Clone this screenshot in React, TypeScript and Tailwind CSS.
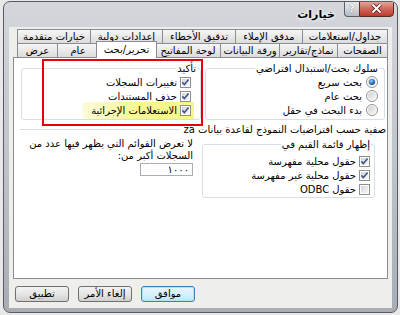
import React from 'react';

const Check = ({ on = true }: { on?: boolean }) => (
  <svg width="11" height="11" viewBox="0 0 11 11" className="shrink-0">
    <defs>
      <linearGradient id="cbx" x1="0" y1="0" x2="1" y2="1">
        <stop offset="0" stopColor="#d4d4d4" />
        <stop offset="1" stopColor="#fafafa" />
      </linearGradient>
    </defs>
    <rect x="0.5" y="0.5" width="10" height="10" fill="#fff" stroke="#8e8f8f" />
    <rect x="2" y="2" width="7" height="7" fill="url(#cbx)" />
    {on && <path d="M2.3 5.4 L4.4 7.6 L8.6 2.6" fill="none" stroke="#40568c" strokeWidth="1.6" />}
  </svg>
);

const Radio = ({ on = false }: { on?: boolean }) => (
  <svg width="12" height="12" viewBox="0 0 12 12" className="shrink-0">
    <defs>
      <linearGradient id="rdo" x1="0" y1="0" x2="1" y2="1">
        <stop offset="0" stopColor="#cfcfcf" />
        <stop offset="1" stopColor="#f7f7f7" />
      </linearGradient>
      <radialGradient id="rdot" cx="0.4" cy="0.35" r="0.7">
        <stop offset="0" stopColor="#9fd3ff" />
        <stop offset="0.6" stopColor="#2a6fc0" />
        <stop offset="1" stopColor="#0f3f86" />
      </radialGradient>
    </defs>
    <circle cx="6" cy="6" r="5.5" fill="#fff" stroke="#8e8f8f" />
    <circle cx="6" cy="6" r="4" fill="url(#rdo)" />
    {on && <circle cx="6" cy="6" r="3" fill="url(#rdot)" />}
  </svg>
);

const Tab = ({ label, w, first, active }: { label: string; w: string; first?: boolean; active?: boolean }) => (
  <div
    className={`flex items-center justify-center border-t border-l border-[#898c95] text-[10px] leading-none ${w} ${
      first ? 'border-r' : ''
    } ${
      active
        ? 'relative z-10 -mx-[2px] -mt-[2px] -mb-px h-[17px] border-r bg-white'
        : 'h-[14px] bg-gradient-to-b from-[#f6f6f6] to-[#dcdcdc]'
    }`}
  >
    {label}
  </div>
);

const Btn = ({ label, focus }: { label: string; focus?: boolean }) => (
  <div
    className={`flex h-[16px] w-[54px] items-center justify-center rounded-[3px] border text-[10px] leading-none ${
      focus
        ? 'border-[#3c7fb1] bg-gradient-to-b from-[#eaf6fd] via-[#d9f0fc] to-[#bee6fd] shadow-[inset_0_0_0_1px_#b6e1f7]'
        : 'border-[#707070] bg-gradient-to-b from-[#f2f2f2] via-[#e6e6e6] to-[#cfcfcf]'
    }`}
  >
    {label}
  </div>
);

export default function App() {
  return (
    <div className="h-[315px] w-[400px] overflow-hidden bg-[#e8e8e8] pt-px pl-[3px] font-['DejaVu_Sans',sans-serif] text-black">
      <div className="flex h-[312px] w-[395px] flex-col overflow-hidden rounded-[7px] border border-[#585c63] bg-gradient-to-b from-[#d3d6db] via-[#c0c4cb] to-[#a8acb4]">
        {/* title bar */}
        <div className="flex h-[25px] shrink-0 items-start justify-end pr-[3px]">
          <span className="mt-[6px] mr-[9px] text-[11px] font-bold leading-[13px] [text-shadow:0_0_5px_#fff,0_0_3px_#fff]">
            خيارات
          </span>
          <div className="-mt-[2px] flex h-[17px] w-[15px] items-center justify-center rounded-bl-[4px] border border-r-0 border-[#5c6168] bg-gradient-to-b from-[#e6e9ed] via-[#d3d8de] to-[#b4bbc5] text-[10px] font-bold text-white [text-shadow:0_0_1px_#4a4f56]">
            ?
          </div>
          <div className="-mt-[2px] h-[17px] w-[35px] rounded-br-[4px] border border-[#5a2a26] bg-gradient-to-b from-[#e8ada2] via-[#cf6a5d] to-[#c0382b]">
            <svg width="33" height="15" viewBox="0 0 33 15">
              <path d="M12.5 3.5 L20.5 11.5 M20.5 3.5 L12.5 11.5" stroke="#4a1510" strokeWidth="3.6" />
              <path d="M12.5 3.5 L20.5 11.5 M20.5 3.5 L12.5 11.5" stroke="#fff" strokeWidth="2" />
            </svg>
          </div>
        </div>

        {/* client area */}
        <div dir="rtl" className="mx-[5px] mb-[4px] flex flex-1 flex-col bg-[#eeeeeb] pt-[2px]">
          <div className="flex pr-[4px]">
            <Tab first label="جداول/استعلامات" w="w-[86px]" />
            <Tab label="مدقق الإملاء" w="w-[67px]" />
            <Tab label="تدقيق الأخطاء" w="w-[73px]" />
            <Tab label="إعدادات دولية" w="w-[72px]" />
            <Tab label="خيارات متقدمة" w="w-[73px]" />
          </div>
          <div className="flex pr-[4px]">
            <Tab first label="الصفحات" w="w-[51px]" />
            <Tab label="نماذج/تقارير" w="w-[58px]" />
            <Tab label="ورقة البيانات" w="w-[59px]" />
            <Tab label="لوحة المفاتيح" w="w-[65px]" />
            <Tab active label="تحرير/بحث" w="w-[61px]" />
            <Tab label="عام" w="w-[41px]" />
            <Tab label="عرض" w="w-[40px]" />
          </div>

          {/* panel */}
          <div className="relative mr-[4px] h-[222px] w-[375px] border border-[#898c95] bg-white text-[10px] leading-[13px]">
            <div className="grid grid-cols-[180px_180px] gap-x-[4px] pt-[4px] pr-[2px]">
              <fieldset className="rounded-[3px] border border-[#d5dfe5] pb-[2px]">
                <legend className="mr-[5px] px-px">سلوك بحث/استبدال افتراضي</legend>
                <div className="flex h-[14px] items-center gap-[4px] pr-[6px]">
                  <Radio on />
                  <span>بحث سريع</span>
                </div>
                <div className="flex h-[14px] items-center gap-[4px] pr-[6px]">
                  <Radio />
                  <span>بحث عام</span>
                </div>
                <div className="flex h-[14px] items-center gap-[4px] pr-[6px]">
                  <Radio />
                  <span>بدء البحث في حقل</span>
                </div>
              </fieldset>

              <fieldset className="rounded-[3px] border border-[#d5dfe5] pb-[2px]">
                <legend className="mr-[3px] px-px">تأكيد</legend>
                <div className="flex h-[14px] items-center gap-[3px] pr-[9px]">
                  <Check />
                  <span>تغييرات السجلات</span>
                </div>
                <div className="flex h-[14px] items-center gap-[3px] pr-[9px]">
                  <Check />
                  <span>حذف المستندات</span>
                </div>
                <div className="relative flex h-[14px] items-center gap-[3px] pr-[9px]">
                  <div className="absolute -top-px right-[6px] h-[17px] w-[111px] bg-gradient-to-l from-[#f6f68c] via-[#f7f793] to-[#fbfbd6]" />
                  <span className="relative flex items-center gap-[3px]">
                    <Check />
                    <span>الاستعلامات الإجرائية</span>
                  </span>
                </div>
              </fieldset>
            </div>

            <div className="mt-[3px] flex h-[13px] items-center pr-px pl-[6px]">
              <span className="whitespace-nowrap">صفية حسب افتراضيات النموذج لقاعدة بيانات za</span>
              <div className="mr-[3px] h-px flex-1 bg-[#d5dfe5]" />
            </div>

            <div className="mt-[2px] grid grid-cols-[173px_176px] gap-x-[5px] pr-[12px]">
              <fieldset className="rounded-[3px] border border-[#d5dfe5] pt-[3px] pb-px">
                <legend className="mr-[3px] px-px">إظهار قائمة القيم في</legend>
                <div className="flex h-[14px] items-center gap-[3px] pr-[4px]">
                  <Check />
                  <span>حقول محلية مفهرسة</span>
                </div>
                <div className="flex h-[14px] items-center gap-[3px] pr-[4px]">
                  <Check />
                  <span>حقول محلية غير مفهرسة</span>
                </div>
                <div className="flex h-[14px] items-center gap-[3px] pr-[4px]">
                  <Check on={false} />
                  <span>حقول ODBC</span>
                </div>
              </fieldset>

              <div className="pr-[4px]">
                <p className="leading-[12px]">
                  لا تعرض القوائم التي يظهر فيها عدد من
                  <br />
                  السجلات أكبر من:
                </p>
                <div className="mt-px flex h-[13px] w-[53px] items-center border border-[#abadb3] bg-white pr-[3px] text-[10px]">
                  ١٠٠٠
                </div>
              </div>
            </div>

            {/* red annotation frame */}
            <div className="pointer-events-none absolute top-px left-[28px] h-[67px] w-[161px] border-2 border-[#e5000a]" />
          </div>

          {/* buttons */}
          <div dir="ltr" className="mt-[7px] flex gap-[9px] pl-[6px]">
            <Btn label="تطبيق" />
            <Btn label="إلغاء الأمر" />
            <Btn focus label="موافق" />
          </div>
        </div>
      </div>
    </div>
  );
}
